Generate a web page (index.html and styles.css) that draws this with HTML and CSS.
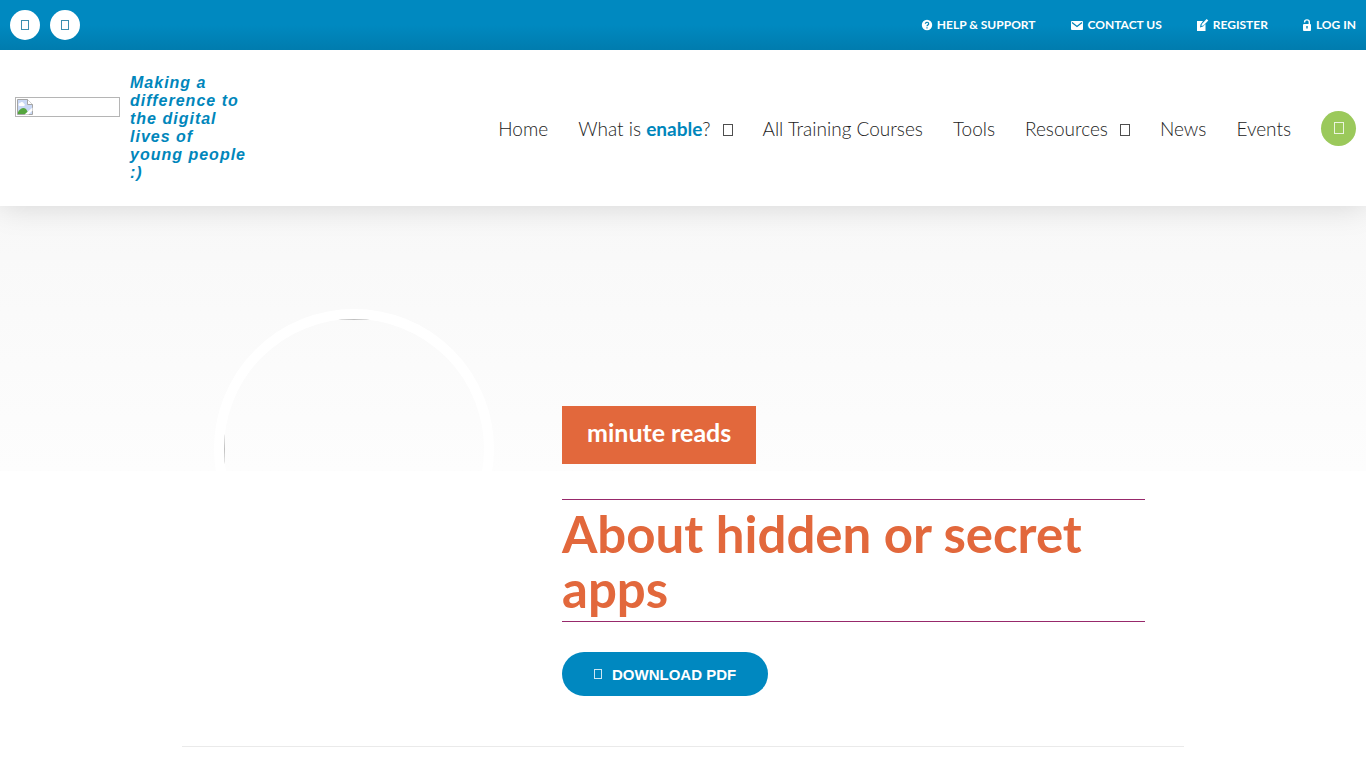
FILE: index.html
```html
<!DOCTYPE html>
<html lang="en">
<head>
    <meta charset="UTF-8">
    <meta name="viewport" content="width=device-width, initial-scale=1.0">
    <title>About hidden or secret apps</title>
    <link rel="stylesheet" href="styles.css">
</head>
<body>
    <div class="topbar">
        <div class="social">
            <a href="#" class="social-link" aria-label="Facebook"><span class="glyph"></span></a>
            <a href="#" class="social-link" aria-label="Twitter"><span class="glyph"></span></a>
        </div>
        <nav class="account">
            <a href="#">
                <svg width="12" height="12" viewBox="0 0 12 12"><circle cx="6" cy="6" r="5.2" fill="#fff"/><path d="M4.3 4.8a1.7 1.5 0 1 1 2.5 1.3Q6 6.5 6 7.2M6 8.2v1.2" fill="none" stroke="#0082b6" stroke-width="1.2"/></svg>
                HELP &amp; SUPPORT
            </a>
            <a href="#">
                <svg width="14" height="12" viewBox="0 0 14 12"><rect x="1" y="2" width="12" height="9" rx="1" fill="#fff"/><path d="M2 3.5l5 4 5-4" fill="none" stroke="#0082b6" stroke-width="1.2"/></svg>
                CONTACT US
            </a>
            <a href="#">
                <svg width="13" height="14" viewBox="0 0 13 14"><path d="M1 3h6L4.5 6.5 4 9.5l3-1L9.5 6v7H1z" fill="#fff"/><path d="M5.4 8l.5-1.900L10.600 1l1.700 1.400L7.500 7.400z" fill="#fff"/></svg>
                REGISTER
            </a>
            <a href="#">
                <svg width="10" height="12" viewBox="0 0 10 12"><rect x="1" y="5" width="8" height="7" rx="1" fill="#fff"/><path d="M2.6 3.4V3a2.3 2.1 0 0 1 4.700 0v2.5" fill="none" stroke="#fff" stroke-width="1.4"/><path d="M5 7v2.6" stroke="#0082b6" stroke-width="1.4"/></svg>
                LOG IN
            </a>
        </nav>
    </div>

    <header class="header">
        <a href="#" class="brand">
            <span class="logo">
                <svg width="16" height="16" viewBox="0 0 16 16"><path d="M.5 .5h10l5 5v10H.5z" fill="#c9d8f5" stroke="#a5a5a5"/><path d="M10.5 .5v5h5" fill="#fff" stroke="#a5a5a5"/><path d="M2.5 7a1.500 1.500 0 0 1 .6-2.900 2 2 0 0 1 3.700 .3A1.400 1.400 0 0 1 7 7z" fill="#fff"/><path d="M1 15v-2q4-6 8-3l3 5z" fill="#55a63e"/><path d="M7.5 15.5l8-7v3l-4 4z" fill="#fff"/></svg>
            </span>
            <span class="tagline">Making a difference to the digital lives of young people :)</span>
        </a>
        <nav class="menu">
            <a href="#">Home</a>
            <a href="#">What is <strong>enable</strong>?<span class="glyph"></span></a>
            <a href="#">All Training Courses</a>
            <a href="#">Tools</a>
            <a href="#">Resources<span class="glyph"></span></a>
            <a href="#">News</a>
            <a href="#">Events</a>
            <button type="button" class="search" aria-label="Search"><span class="glyph"></span></button>
        </nav>
    </header>

    <main class="hero">
        <div class="container">
            <div class="picture">
                <div class="avatar"><div class="avatar-image"></div></div>
            </div>
            <div class="intro">
                <span class="badge">minute reads</span>
                <h1>About hidden or secret apps</h1>
                <a href="#" class="download"><span class="glyph"></span>DOWNLOAD PDF</a>
            </div>
        </div>
    </main>
</body>
</html>
```

FILE: styles.css
```css
* {
    box-sizing: border-box;
}
body {
    margin: 0;
    background: #fff;
    font-family: "Century Gothic", Lato, sans-serif;
    color: #222;
}
a {
    color: inherit;
    text-decoration: none;
}

/* hollow box used for every icon font glyph */
.glyph {
    display: inline-block;
    width: 8px;
    height: 10px;
    border: 1px solid currentColor;
    opacity: 0.8;
}

.topbar {
    display: flex;
    align-items: center;
    justify-content: space-between;
    height: 50px;
    padding: 0 10px;
    background: linear-gradient(#0089c0 50%, #007cae);
}
.social {
    display: flex;
    gap: 10px;
}
.social-link {
    display: flex;
    align-items: center;
    justify-content: center;
    width: 30px;
    height: 30px;
    border-radius: 50%;
    background: #fff;
    color: #0a729b;
}
.account {
    display: flex;
    gap: 34px;
    color: #fff;
    font-size: 12px;
    font-weight: 700;
    line-height: 16px;
}
.account a {
    display: flex;
    align-items: center;
    gap: 4px;
}

.header {
    position: relative;
    display: flex;
    align-items: center;
    justify-content: space-between;
    min-height: 156px;
    padding: 0 10px 0 15px;
    background: #fff;
    box-shadow: 0 0 30px rgba(0, 0, 0, 0.15);
    clip-path: inset(0 0 -60px 0);
}
.brand {
    display: flex;
    gap: 10px;
    color: #0086bb;
}
.logo {
    width: 105px;
    height: 20px;
    margin-top: 23px;
    padding: 1px;
    border: 1px solid #b5b5b5;
}
.logo svg {
    display: block;
}
.tagline {
    width: 120px;
    font: italic 700 16px/18px "Liberation Sans", Arial, sans-serif;
    letter-spacing: 1px;
}
.menu {
    display: flex;
    align-items: center;
    gap: 30px;
    font-size: 19px;
    font-weight: 300;
}
.menu strong {
    color: #0086bb;
    font-weight: 700;
}
.menu .glyph {
    width: 10px;
    height: 12px;
}
.menu a .glyph {
    margin-left: 12px;
}
.search {
    display: flex;
    align-items: center;
    justify-content: center;
    width: 35px;
    height: 35px;
    padding: 0;
    border: 0;
    border-radius: 50%;
    background: #9bc95b;
    color: #fff;
    cursor: pointer;
}

.hero {
    background: linear-gradient(#f8f8f8, #fdfdfd) no-repeat;
    background-size: 100% 265px;
}
.container {
    display: flex;
    max-width: 1002px;
    margin: 0 auto;
    padding-bottom: 50px;
    border-bottom: 1px solid #eaeaea;
}
.picture {
    width: 344px;
    padding-top: 103px;
}
.avatar {
    width: 280px;
    height: 280px;
    margin: 0 auto;
    border: 10px solid #fff;
    border-radius: 50%;
    overflow: hidden;
}
.avatar-image {
    width: 300px;
    height: 300px;
    border: 1px solid #c0c0c0;
}
.intro {
    flex: 1;
    padding: 200px 39px 0 36px;
}
.badge {
    display: block;
    width: fit-content;
    padding: 12px 25px 18px;
    background: #e2683c;
    color: #fff;
    font-size: 25px;
    font-weight: 700;
    line-height: 28px;
}
h1 {
    margin: 35px 0 30px;
    padding: 6px 0 5px;
    border-top: 1px solid #97296b;
    border-bottom: 1px solid #97296b;
    color: #e2683c;
    font-size: 51px;
    font-weight: 700;
    line-height: 55px;
}
.download {
    display: inline-flex;
    align-items: center;
    gap: 10px;
    height: 44px;
    padding: 0 32px;
    border-radius: 22px;
    background: #0088c0;
    color: #fff;
    font: 700 15px "Liberation Sans", Arial, sans-serif;
}
```
